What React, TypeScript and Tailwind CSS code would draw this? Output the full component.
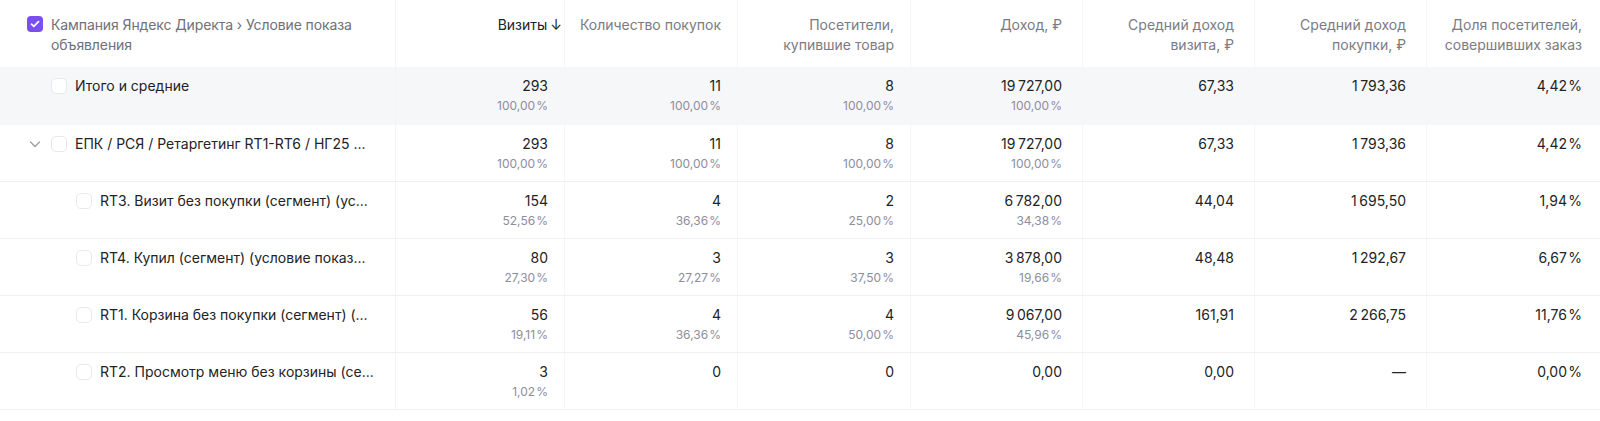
const cols = "grid grid-cols-[396px_169px_173px_173px_172px_172px_172px_173px]";

type Cell = { v: string; p?: string };

type Row = {
  name: string;
  level: 0 | 1 | 2;
  total?: boolean;
  cells: Cell[];
};

// thousands separator and the gap before the percent sign
const K = "\u2009";
const T = "\u200A";

const rows: Row[] = [
  {
    name: "Итого и средние",
    level: 0,
    total: true,
    cells: [
      { v: "293", p: `100,00${T}%` },
      { v: "11", p: `100,00${T}%` },
      { v: "8", p: `100,00${T}%` },
      { v: `19${K}727,00`, p: `100,00${T}%` },
      { v: "67,33" },
      { v: `1${K}793,36` },
      { v: `4,42${T}%` },
    ],
  },
  {
    name: "ЕПК / РСЯ / Ретаргетинг RT1-RT6 / НГ25 ...",
    level: 1,
    cells: [
      { v: "293", p: `100,00${T}%` },
      { v: "11", p: `100,00${T}%` },
      { v: "8", p: `100,00${T}%` },
      { v: `19${K}727,00`, p: `100,00${T}%` },
      { v: "67,33" },
      { v: `1${K}793,36` },
      { v: `4,42${T}%` },
    ],
  },
  {
    name: "RT3. Визит без покупки (сегмент) (ус...",
    level: 2,
    cells: [
      { v: "154", p: `52,56${T}%` },
      { v: "4", p: `36,36${T}%` },
      { v: "2", p: `25,00${T}%` },
      { v: `6${K}782,00`, p: `34,38${T}%` },
      { v: "44,04" },
      { v: `1${K}695,50` },
      { v: `1,94${T}%` },
    ],
  },
  {
    name: "RT4. Купил (сегмент) (условие показ...",
    level: 2,
    cells: [
      { v: "80", p: `27,30${T}%` },
      { v: "3", p: `27,27${T}%` },
      { v: "3", p: `37,50${T}%` },
      { v: `3${K}878,00`, p: `19,66${T}%` },
      { v: "48,48" },
      { v: `1${K}292,67` },
      { v: `6,67${T}%` },
    ],
  },
  {
    name: "RT1. Корзина без покупки (сегмент) (...",
    level: 2,
    cells: [
      { v: "56", p: `19,11${T}%` },
      { v: "4", p: `36,36${T}%` },
      { v: "4", p: `50,00${T}%` },
      { v: `9${K}067,00`, p: `45,96${T}%` },
      { v: "161,91" },
      { v: `2${K}266,75` },
      { v: `11,76${T}%` },
    ],
  },
  {
    name: "RT2. Просмотр меню без корзины (се...",
    level: 2,
    cells: [
      { v: "3", p: `1,02${T}%` },
      { v: "0" },
      { v: "0" },
      { v: "0,00" },
      { v: "0,00" },
      { v: "—" },
      { v: `0,00${T}%` },
    ],
  },
];

const headers = [
  ["Количество покупок"],
  ["Посетители,", "купившие товар"],
  ["Доход, ₽"],
  ["Средний доход", "визита, ₽"],
  ["Средний доход", "покупки, ₽"],
  ["Доля посетителей,", "совершивших заказ"],
];

const pad = ["pr-4", "pr-4", "pr-4", "pr-5", "pr-5", "pr-5", "pr-[18px]"];

const Checkbox = ({ checked }: { checked?: boolean }) =>
  checked ? (
    <span className="flex items-center justify-center w-4 h-4 rounded-[4px] bg-[#7a4ff0] shrink-0">
      <svg width="10" height="8" viewBox="0 0 10 8" fill="none">
        <path d="M1.5 4.2L3.8 6.3L8.5 1.6" stroke="white" strokeWidth="1.7" strokeLinecap="round" strokeLinejoin="round" />
      </svg>
    </span>
  ) : (
    <span className="block w-4 h-4 rounded-[5px] border border-[#e8e9ec] bg-white shrink-0" />
  );

const Chevron = () => (
  <svg width="12" height="12" viewBox="0 0 12 12" fill="none" className="shrink-0">
    <path d="M1.5 4L6 8.5L10.5 4" stroke="#9a9ba3" strokeWidth="1.2" strokeLinecap="round" strokeLinejoin="round" />
  </svg>
);

export default function App() {
  return (
    <div className="w-[1600px] h-[421px] bg-white text-[14px] leading-5 text-[#222326] font-['Inter','Noto_Sans',sans-serif] overflow-hidden">
      {/* header */}
      <div className={`${cols} h-[67px]`}>
        <div className="flex items-start gap-2 pl-[27px] pt-[15px] pr-2 border-r border-[#f3f4f6] text-[#6f7078] tracking-[-0.1px]">
          <span className="mt-[1px]">
            <Checkbox checked />
          </span>
          <span>Кампания Яндекс Директа › Условие показа объявления</span>
        </div>
        <div className="flex justify-end pt-[15px] pr-4 border-r border-[#f5f6f8]">
          <span className="text-[#222326]">Визиты</span>
          <span className="-mr-[14px] ml-[3px] text-[#222326]">↓</span>
        </div>
        {headers.map((h, i) => (
          <div
            key={i}
            className={`flex flex-col items-end pt-[15px] ${pad[i + 1]} text-right text-[#7a7b83] ${i < 5 ? "border-r border-[#f5f6f8]" : ""}`}
          >
            {h.map((l) => (
              <span key={l}>{l}</span>
            ))}
          </div>
        ))}
      </div>

      {rows.map((r, ri) => (
        <div
          key={ri}
          className={`${cols} ${r.total ? "h-[58px] bg-[#f6f7f9]" : "h-[57px] border-b border-[#eef0f2]"}`}
        >
          <div
            className={`flex items-start pt-[9px] border-r border-[#f3f4f6] ${
              r.level === 2 ? "pl-[76px]" : r.level === 1 ? "pl-[29px]" : "pl-[51px]"
            }`}
          >
            {r.level === 1 && (
              <span className="mt-[4px] mr-[10px]">
                <Chevron />
              </span>
            )}
            <span className="mt-[2px]">
              <Checkbox />
            </span>
            <span className="ml-2 whitespace-nowrap truncate">{r.name}</span>
          </div>
          {r.cells.map((c, ci) => (
            <div
              key={ci}
              className={`flex flex-col items-end pt-[9px] ${pad[ci]} ${ci < 6 ? "border-r border-[#f5f6f8]" : ""}`}
            >
              <span className="whitespace-nowrap">{c.v}</span>
              {c.p && <span className="text-[12px] leading-5 text-[#8d8e9c] whitespace-nowrap">{c.p}</span>}
            </div>
          ))}
        </div>
      ))}
    </div>
  );
}
